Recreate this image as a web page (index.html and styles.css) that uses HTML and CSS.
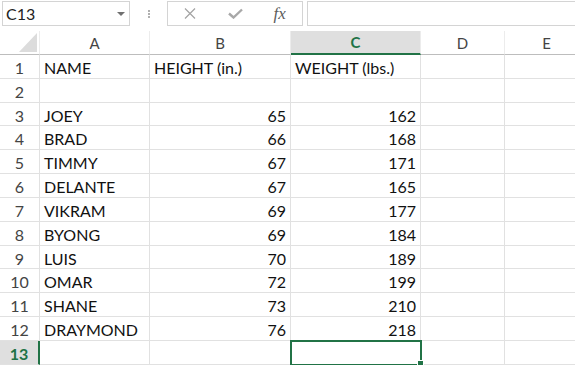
FILE: index.html
```html
<!DOCTYPE html>
<html lang="en">
<head>
  <meta charset="UTF-8">
  <title>Book1 - Excel</title>
  <link rel="stylesheet" href="styles.css">
</head>
<body>

  <div class="toolbar">
    <div class="name-box">
      <span>C13</span>
      <span class="arrow"></span>
    </div>
    <div class="grip"><i></i><i></i><i></i></div>
    <div class="fx-buttons">
      <span class="fx-btn">
        <svg width="12" height="11" viewBox="0 0 12 11"><path d="M1 0.5 L11 10.5 M11 0.5 L1 10.5" stroke="#a3a3a3" stroke-width="1.2" fill="none"/></svg>
      </span>
      <span class="fx-btn">
        <svg width="15" height="11" viewBox="0 0 15 11"><path d="M1 5.5 L5.5 9.5 L14 1.5" stroke="#a8a8a8" stroke-width="2.4" fill="none"/></svg>
      </span>
      <span class="fx-btn fx">fx</span>
    </div>
    <div class="formula"></div>
  </div>

  <div class="sheet">
    <div class="row head">
      <div class="corner"><span class="tri"></span></div>
      <div class="col">A</div>
      <div class="col">B</div>
      <div class="col active">C</div>
      <div class="col">D</div>
      <div class="col">E</div>
    </div>

    <div class="row"><div class="num">1</div><div class="cell">NAME</div><div class="cell">HEIGHT (in.)</div><div class="cell">WEIGHT (lbs.)</div><div class="cell"></div><div class="cell"></div></div>
    <div class="row"><div class="num">2</div><div class="cell"></div><div class="cell"></div><div class="cell"></div><div class="cell"></div><div class="cell"></div></div>
    <div class="row"><div class="num">3</div><div class="cell">JOEY</div><div class="cell n">65</div><div class="cell n">162</div><div class="cell"></div><div class="cell"></div></div>
    <div class="row"><div class="num">4</div><div class="cell">BRAD</div><div class="cell n">66</div><div class="cell n">168</div><div class="cell"></div><div class="cell"></div></div>
    <div class="row"><div class="num">5</div><div class="cell">TIMMY</div><div class="cell n">67</div><div class="cell n">171</div><div class="cell"></div><div class="cell"></div></div>
    <div class="row"><div class="num">6</div><div class="cell">DELANTE</div><div class="cell n">67</div><div class="cell n">165</div><div class="cell"></div><div class="cell"></div></div>
    <div class="row"><div class="num">7</div><div class="cell">VIKRAM</div><div class="cell n">69</div><div class="cell n">177</div><div class="cell"></div><div class="cell"></div></div>
    <div class="row"><div class="num">8</div><div class="cell">BYONG</div><div class="cell n">69</div><div class="cell n">184</div><div class="cell"></div><div class="cell"></div></div>
    <div class="row"><div class="num">9</div><div class="cell">LUIS</div><div class="cell n">70</div><div class="cell n">189</div><div class="cell"></div><div class="cell"></div></div>
    <div class="row"><div class="num">10</div><div class="cell">OMAR</div><div class="cell n">72</div><div class="cell n">199</div><div class="cell"></div><div class="cell"></div></div>
    <div class="row"><div class="num">11</div><div class="cell">SHANE</div><div class="cell n">73</div><div class="cell n">210</div><div class="cell"></div><div class="cell"></div></div>
    <div class="row"><div class="num">12</div><div class="cell">DRAYMOND</div><div class="cell n">76</div><div class="cell n">218</div><div class="cell"></div><div class="cell"></div></div>
    <div class="row"><div class="num active">13</div><div class="cell"></div><div class="cell"></div><div class="cell selected"></div><div class="cell"></div><div class="cell"></div></div>
  </div>

</body>
</html>
```

FILE: styles.css
```css
body {
  margin: 0;
  width: 575px;
  overflow: hidden;
  background-color: #ffffff;
  font-family: Lato, "Liberation Sans", sans-serif;
  color: #000;
}

/* formula bar */
.toolbar {
  display: flex;
  align-items: flex-start;
  height: 31px;
  padding-top: 1px;
  box-sizing: border-box;
}
.name-box {
  margin-left: 2px;
  width: 128px;
  height: 25px;
  box-sizing: border-box;
  border: 1px solid #d4d4d4;
  display: flex;
  align-items: center;
  justify-content: space-between;
  padding: 0 4px 0 3px;
  font-size: 16px;
  color: #222;
}
.name-box .arrow {
  border-left: 4px solid transparent;
  border-right: 4px solid transparent;
  border-top: 4px solid #707070;
}
.grip {
  width: 37px;
  height: 25px;
  display: flex;
  flex-direction: column;
  align-items: center;
  justify-content: center;
  gap: 1px;
}
.grip i {
  width: 2px;
  height: 2px;
  background-color: #b0b0b0;
}
.fx-buttons {
  width: 136px;
  height: 25px;
  box-sizing: border-box;
  border: 1px solid #d4d4d4;
  display: flex;
  align-items: center;
}
.fx-btn {
  width: 45px;
  display: flex;
  justify-content: center;
  align-items: center;
}
.fx {
  font-family: "Liberation Serif", serif;
  font-style: italic;
  font-size: 17px;
  color: #5c5c5c;
}
.formula {
  flex: 1;
  margin-left: 4px;
  height: 25px;
  box-sizing: border-box;
  border: 1px solid #d4d4d4;
  border-right: none;
}

/* grid */
.row {
  display: grid;
  grid-template-columns: 40px 110px 141px 130px 84px 84px;
  height: 23.83px;
}
.row > div {
  box-sizing: border-box;
  border-right: 1px solid #e1e1e1;
  border-bottom: 1px solid #e1e1e1;
  display: flex;
  align-items: center;
  white-space: nowrap;
}
.row.head {
  height: 24px;
}
.row.head > div {
  border-bottom: 1px solid #bdbdbd;
  border-right: 1px solid #ececec;
}
.corner {
  justify-content: flex-end;
  align-items: flex-end !important;
  padding: 0 2px 2px 0;
}
.tri {
  width: 18px;
  height: 19px;
  background-color: #dcdcdc;
  clip-path: polygon(100% 0, 100% 100%, 0 100%);
}
.col {
  justify-content: center;
  font-size: 15px;
  color: #444;
}
.col.active {
  background-color: #dfdfdf;
  border-bottom: 2px solid #217346 !important;
  color: #217346;
  font-weight: bold;
}
.num {
  justify-content: center;
  font-size: 16px;
  color: #444;
  padding-top: 2px;
}
.num.active {
  background-color: #dfdfdf;
  border-right: 2px solid #217346 !important;
  color: #217346;
  font-weight: bold;
}
.cell {
  padding: 2px 4px 0 4px;
  font-size: 16px;
  color: #111;
}
.cell.n {
  justify-content: flex-end;
}
.cell.selected {
  position: relative;
  outline: 2px solid #217346;
  outline-offset: -1px;
}
.cell.selected::after {
  content: "";
  position: absolute;
  right: -4px;
  bottom: -3px;
  width: 5px;
  height: 5px;
  background-color: #217346;
  border: 1px solid #fff;
}
```
